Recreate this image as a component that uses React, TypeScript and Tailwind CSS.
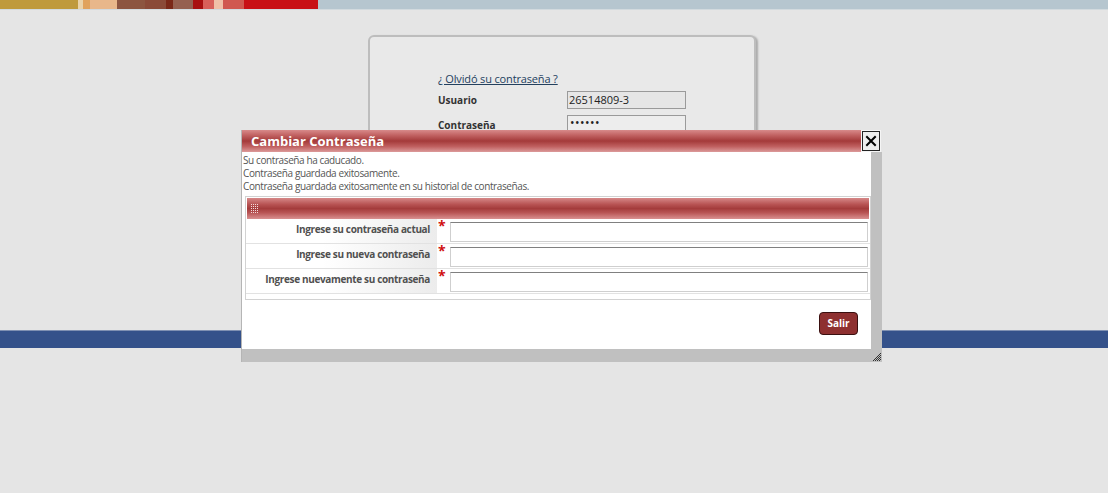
import React from "react";

const stripes: [number, string][] = [
  [78, "#bf9a3c"],
  [5, "#ead3a8"],
  [7, "#e0a35c"],
  [27, "#e8b78a"],
  [28, "#8c5540"],
  [21, "#8a4a38"],
  [7, "#7a2818"],
  [20, "#956050"],
  [10, "#a81010"],
  [11, "#d8605a"],
  [9, "#f0c0a8"],
  [21, "#d05850"],
  [74, "#c81016"],
];

function GripDots() {
  const dots = [];
  for (let r = 0; r < 5; r++) {
    for (let c = 0; c < 4; c++) {
      dots.push(<rect key={`${r}-${c}`} x={c * 2} y={r * 2} width={1} height={1} fill="#f3dada" />);
    }
  }
  return (
    <svg width="8" height="10" viewBox="0 0 8 10">
      {dots}
    </svg>
  );
}

function ResizeGrip() {
  const dots = [];
  for (let r = 0; r < 8; r++) {
    for (let c = 0; c < 8; c++) {
      if (c + r >= 7 && (c + r) % 2 === 1) dots.push(<rect key={`${r}-${c}`} x={c} y={r} width={1} height={1} fill="#333" />);
    }
  }
  return (
    <svg width="8" height="8" viewBox="0 0 8 8">
      {dots}
    </svg>
  );
}

function Row({ label }: { label: string }) {
  return (
    <div className="flex h-[25px] border-b border-[#e2e2e2]">
      <div className="w-[191px] flex items-start justify-end pt-[2px] pr-[7px] bg-[linear-gradient(to_right,#ffffff_40%,#ececec)] text-[10px] leading-[16px] font-bold tracking-[-0.35px] text-[#505050]">
        {label}
      </div>
      <div className="w-[13px] pl-[1px] text-[14px] leading-[14px] font-bold text-[#d01010]">*</div>
      <div className="pt-[3px]">
        <div className="w-[418px] h-[20px] bg-white border border-[#cfcfcf] border-t-[#808080]" />
      </div>
    </div>
  );
}

export default function App() {
  return (
    <div className="relative w-[1108px] h-[493px] bg-[#e5e5e5] overflow-hidden font-['Open_Sans',sans-serif]">
      <div className="flex h-[9px]">
        {stripes.map(([w, c], i) => (
          <div key={i} className="h-full" style={{ width: w, background: c }} />
        ))}
        <div className="flex-1 bg-[#b6c6cf]" />
      </div>
      <div className="h-px bg-[#d2dade]" />

      <div className="h-[320px] pt-[25px] pl-[368px]">
        <div className="w-[388px] h-[285px] rounded-[6px] border-2 border-[#bdbdbd] bg-[#e9e9e9] shadow-[2px_1px_2px_rgba(0,0,0,0.25)] pl-[68px] pt-[33px]">
          <div className="text-[11px] tracking-[-0.15px] text-[#23405e] underline leading-[18px]">¿ Olvidó su contraseña ?</div>
          <div className="mt-[3px] flex items-center h-[18px]">
            <div className="w-[129px] text-[10px] font-bold text-[#333]">Usuario</div>
            <div className="w-[119px] h-[18px] border border-[#9a9a9a] bg-[#e6e6e6] text-[11px] leading-[16px] pl-[1px] text-[#222]">26514809-3</div>
          </div>
          <div className="mt-[6px] flex items-center h-[17px]">
            <div className="w-[129px] text-[10px] font-bold text-[#333] pt-[3px]">Contraseña</div>
            <div className="w-[119px] h-[17px] border border-[#9a9a9a] bg-[#ededed] text-[12px] leading-[14px] pl-[2px] tracking-[0.5px] text-[#222]">••••••</div>
          </div>
        </div>
      </div>

      <div className="h-px bg-[#7f90b2]" />
      <div className="h-[17px] bg-[#34518a]" />

      <div className="absolute left-[241px] top-[130px] w-[641px] h-[232px] flex flex-col border-l border-[#b5b5b5]">
        <div className="h-[22px] w-[639px] flex items-center justify-between pl-[9px] bg-[linear-gradient(to_bottom,#d88a8a,#c06060_25%,#a43a3a_50%,#c06060_75%,#dc9a9a)]">
          <span className="text-[13px] font-bold text-white leading-none">Cambiar Contraseña</span>
          <div className="mr-px w-[18px] h-[20px] border border-[#222] bg-[#ececec] flex items-center justify-center outline outline-1 outline-[#f5f5f5]">
            <svg width="12" height="12" viewBox="0 0 12 12">
              <path d="M2 2 L10 10 M10 2 L2 10" stroke="#000" strokeWidth="2" strokeLinecap="square" />
            </svg>
          </div>
        </div>
        <div className="flex h-[197px]">
          <div className="w-[629px] bg-white flex flex-col">
            <div className="pt-[2px] pl-[1px] text-[10px] leading-[13px] tracking-[-0.4px] text-[#555]">
              <div>Su contraseña ha caducado.</div>
              <div>Contraseña guardada exitosamente.</div>
              <div>Contraseña guardada exitosamente en su historial de contraseñas.</div>
            </div>
            <div className="mt-[3px] ml-[3px] w-[626px] h-[104px] border border-[#d2d2d2]">
              <div className="h-[21px] mt-px mx-px flex items-center pl-[4px] bg-[linear-gradient(to_bottom,#d68888,#b85454_30%,#a43c3c_50%,#b85454_70%,#d99090)]">
                <GripDots />
              </div>
              <Row label="Ingrese su contraseña actual" />
              <Row label="Ingrese su nueva contraseña" />
              <Row label="Ingrese nuevamente su contraseña" />
            </div>
            <div className="flex justify-end mt-[12px] pr-[13px]">
              <div className="w-[39px] h-[23px] rounded-[4px] bg-[#8e3030] border border-[#3a1010] flex items-center justify-center text-[10px] font-bold text-white">
                Salir
              </div>
            </div>
          </div>
          <div className="flex-1 bg-[#c0c0c0]" />
        </div>
        <div className="h-[13px] bg-[#c0c0c0] flex justify-end items-end pr-[1px] pb-[1px]">
          <ResizeGrip />
        </div>
      </div>
    </div>
  );
}
